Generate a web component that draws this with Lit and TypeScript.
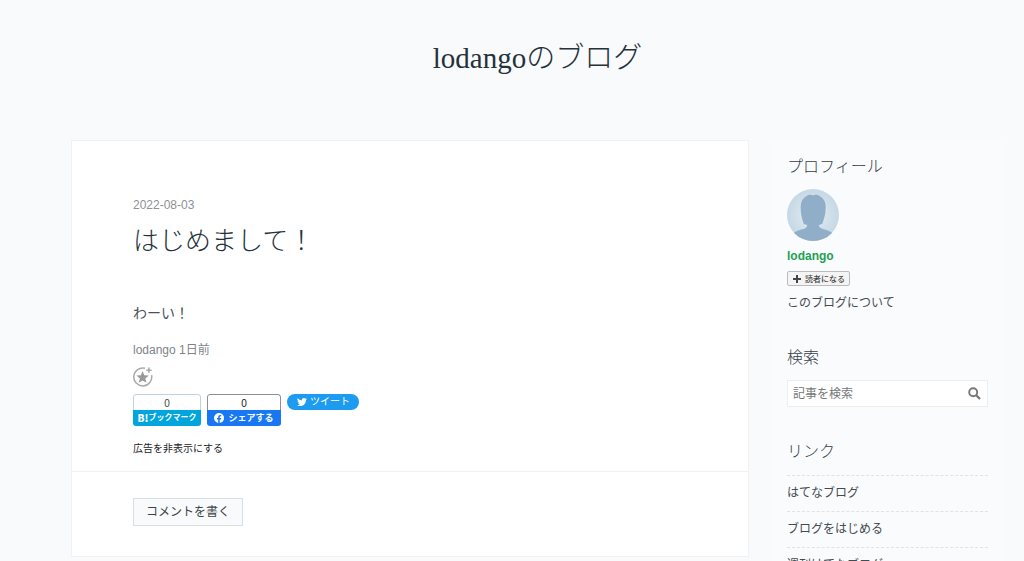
import { LitElement, html, css } from "lit";
import { customElement, state } from "lit/decorators.js";

@customElement("app-root")
export class AppRoot extends LitElement {
  @state() private links = ["はてなブログ", "ブログをはじめる", "週刊はてなブログ"];

  static styles = css`
    :host {
      display: block;
      min-height: 100vh;
      box-sizing: border-box;
      padding: 0 20px 0 71px;
      background: #f9fafc;
      color: #444b50;
      font: 12px/20px "Liberation Sans", "Noto Sans CJK JP", sans-serif;
    }
    a { color: inherit; text-decoration: none; }
    svg { display: block; flex: none; }
    h1, h2, h3, p, ul { margin: 0; padding: 0; font-weight: 400; }
    .title, .entry-title, .heading {
      font-family: "Liberation Serif", "Noto Sans CJK JP", serif;
      font-weight: 300;
    }
    header { padding: 36px 0 60px; text-align: center; }
    .title { font-size: 29px; line-height: 44px; color: #25323b; }
    .columns {
      display: grid;
      grid-template-columns: minmax(0, 1fr) 233px;
      gap: 22px;
      align-items: start;
    }
    .entry { background: #fff; border: 1px solid #eff1f3; }
    .body { padding: 54px 61px 13px; }
    .date { display: block; color: #8c9194; }
    .entry-title { margin-top: 7px; font-size: 26px; line-height: 40px; color: #25323b; }
    .text { margin-top: 41px; font-size: 14px; color: #4a5257; }
    .meta { margin-top: 17px; color: #7d8589; }
    .star {
      display: block;
      margin-top: 7px;
      padding: 0;
      border: 0;
      background: none;
      cursor: pointer;
    }
    .shares { display: flex; align-items: flex-start; gap: 6px; margin-top: 7px; }
    .share {
      box-sizing: border-box;
      width: 68px;
      border-radius: 3px;
      overflow: hidden;
      font-size: 10px;
      font-weight: 700;
      color: #fff;
      text-align: center;
    }
    .share.fb { width: 74px; }
    .count {
      display: block;
      height: 16px;
      box-sizing: border-box;
      border: 1px solid #bcd3e6;
      border-bottom: 0;
      border-radius: 3px 3px 0 0;
      line-height: 17px;
      font-weight: 400;
      color: #444;
    }
    .fb .count { border-color: #8c8f98; color: #111; }
    .label {
      display: flex;
      align-items: center;
      justify-content: center;
      gap: 4px;
      height: 16px;
      background: #00a5de;
      font-size: 9px;
      line-height: 16px;
      white-space: nowrap;
    }
    .label.hatena { gap: 0; font-size: 8px; }
    .mark { font-size: 10px; font-weight: 900; font-family: "Noto Sans CJK JP", sans-serif; }
    .fb .label { background: #1877f2; }
    .tweet {
      display: flex;
      align-items: center;
      gap: 3px;
      height: 16px;
      padding: 0 9px 0 10px;
      border-radius: 8px;
      background: #1d9bf0;
      color: #fff;
      font-size: 10px;
      line-height: 16px;
    }
    .ad { margin-top: 14px; font-size: 10px; line-height: 18px; color: #222; }
    .comments { padding: 26px 61px 30px; border-top: 1px solid #eff1f3; }
    .comment {
      height: 28px;
      padding: 0 12px;
      border: 1px solid #d8e0e4;
      border-radius: 0;
      background: #f9fafc;
      color: #3c4449;
      font: inherit;
      cursor: pointer;
    }
    .side { padding: 16px 16px 20px; background: #fafbfd; }
    .module + .module { margin-top: 34px; }
    .heading { font-size: 16px; line-height: 22px; color: #333e45; }
    .avatar { margin-top: 11px; }
    .name { display: block; margin-top: 5px; color: #1fa152; font-weight: 700; }
    .reader {
      display: flex;
      align-items: center;
      gap: 3px;
      height: 15px;
      margin: 5px 0 7px;
      padding: 0 4px;
      border: 1px solid #bbb;
      border-radius: 2px;
      background: #f4f4f4;
      color: #444;
      font: 500 8px/13px "Noto Sans CJK JP", sans-serif;
      cursor: pointer;
    }
    .search {
      display: flex;
      align-items: center;
      box-sizing: border-box;
      height: 27px;
      margin-top: 11px;
      border: 1px solid #eceff0;
      background: #fff;
    }
    .search input {
      flex: 1;
      min-width: 0;
      padding: 0 5px;
      border: 0;
      background: none;
      font: inherit;
      color: #333;
    }
    .search input::placeholder { color: #777; opacity: 1; }
    .search button { padding: 0 6px; border: 0; background: none; cursor: pointer; }
    ul { list-style: none; margin-top: 12px; }
    li { padding: 7px 0 8px; border-top: 1px dashed #dfe3e6; }
  `;

  render() {
    return html`
      <header><h1 class="title"><a href="#">lodangoのブログ</a></h1></header>
      <div class="columns">
        <main class="entry">
          <article class="body">
            <time class="date" datetime="2022-08-03">2022-08-03</time>
            <h2 class="entry-title"><a href="#">はじめまして！</a></h2>
            <p class="text">わーい！</p>
            <p class="meta"><a href="#">lodango</a> <a href="#">1日前</a></p>
            <button class="star" aria-label="スターをつける">
              <svg width="20" height="20" viewBox="0 0 20 20">
                <path d="M12 1.2A9 9 0 1 0 18.6 8.2" fill="none" stroke="#aaa" stroke-width="1.5" />
                <path d="M9.6 4l1.7 4.2 4.5.3-3.5 2.9 1.2 4.4-3.9-2.4-3.9 2.4 1.2-4.4-3.5-2.9 4.5-.3z" fill="#999" />
                <path d="M15.9.6v5.2M13.3 3.2h5.4" stroke="#aaa" stroke-width="1.6" />
              </svg>
            </button>
            <div class="shares">
              <a class="share" href="#">
                <span class="count">0</span>
                <span class="label hatena"><span class="mark">B!</span>ブックマーク</span>
              </a>
              <a class="share fb" href="#">
                <span class="count">0</span>
                <span class="label">
                  <svg width="10" height="10" viewBox="0 0 24 24">
                    <path fill="#fff" d="M24 12a12 12 0 1 0-13.9 11.9v-8.4h-3V12h3V9.4c0-3 1.8-4.7 4.5-4.7 1.3 0 2.7.2 2.7.2v3h-1.5c-1.5 0-2 .9-2 1.9V12h3.4l-.5 3.5h-2.9v8.4A12 12 0 0 0 24 12z" />
                  </svg>シェアする
                </span>
              </a>
              <a class="tweet" href="#">
                <svg width="10" height="10" viewBox="0 0 24 24">
                  <path fill="#fff" d="M24 4.6a10 10 0 0 1-2.8.8 5 5 0 0 0 2.1-2.7 10 10 0 0 1-3.1 1.2 4.9 4.9 0 0 0-8.4 4.5A14 14 0 0 1 1.7 3.1a4.9 4.9 0 0 0 1.5 6.6 5 5 0 0 1-2.2-.6v.1a4.9 4.9 0 0 0 3.9 4.8 5 5 0 0 1-2.2.1 4.9 4.9 0 0 0 4.6 3.4A9.9 9.9 0 0 1 0 19.5a14 14 0 0 0 7.5 2.2c9.1 0 14-7.5 14-14v-.6A10 10 0 0 0 24 4.6z" />
                </svg>ツイート
              </a>
            </div>
            <p class="ad"><a href="#">広告を非表示にする</a></p>
          </article>
          <section class="comments"><button class="comment">コメントを書く</button></section>
        </main>
        <aside class="side">
          <section class="module">
            <h3 class="heading">プロフィール</h3>
            <svg class="avatar" width="52" height="52" viewBox="0 0 52 52" role="img" aria-label="lodango">
              <defs>
                <radialGradient id="glow"><stop offset="0" stop-color="#e4eef3" /><stop offset="1" stop-color="#c6d8e5" /></radialGradient>
                <clipPath id="round"><circle cx="26" cy="26" r="26" /></clipPath>
              </defs>
              <g clip-path="url(#round)">
                <rect width="52" height="52" fill="url(#glow)" />
                <path fill="#90aec7" d="M26 6.5c-1.5-1.2-4.5-.8-6.500.5-4 2.4-5.8 6-5.8 11.5 0 7 1.500 12 3.1 16.500l3.500 1c-.2 2.500-1.800 3.500-4.800 4.300-4 1-6 1.700-9 3.700V52h39v-8c-3-2-5-2.800-8.800-3.700-2.900-.9-4.700-1.800-5-4.300l3.500-1c1.600-4.500 3.500-9.500 3.500-16.500 0-5.500-2-9.100-6-11.500-2-1.300-5-1.700-6.700-.5z" />
              </g>
            </svg>
            <a class="name" href="#">lodango</a>
            <button class="reader">
              <svg width="10" height="10" viewBox="0 0 10 10"><path d="M5 1v8M1 5h8" stroke="#444" stroke-width="2" /></svg>読者になる
            </button>
            <a href="#">このブログについて</a>
          </section>
          <section class="module">
            <h3 class="heading">検索</h3>
            <form class="search" role="search">
              <input type="text" placeholder="記事を検索" aria-label="記事を検索" />
              <button type="button" aria-label="検索">
                <svg width="13" height="13" viewBox="0 0 13 13">
                  <circle cx="5.2" cy="5.2" r="4" fill="none" stroke="#777" stroke-width="1.9" />
                  <path d="M8.2 8.2l3.8 3.8" stroke="#777" stroke-width="2.3" />
                </svg>
              </button>
            </form>
          </section>
          <section class="module">
            <h3 class="heading">リンク</h3>
            <ul>${this.links.map((name) => html`<li><a href="#">${name}</a></li>`)}</ul>
          </section>
        </aside>
      </div>
    `;
  }
}
